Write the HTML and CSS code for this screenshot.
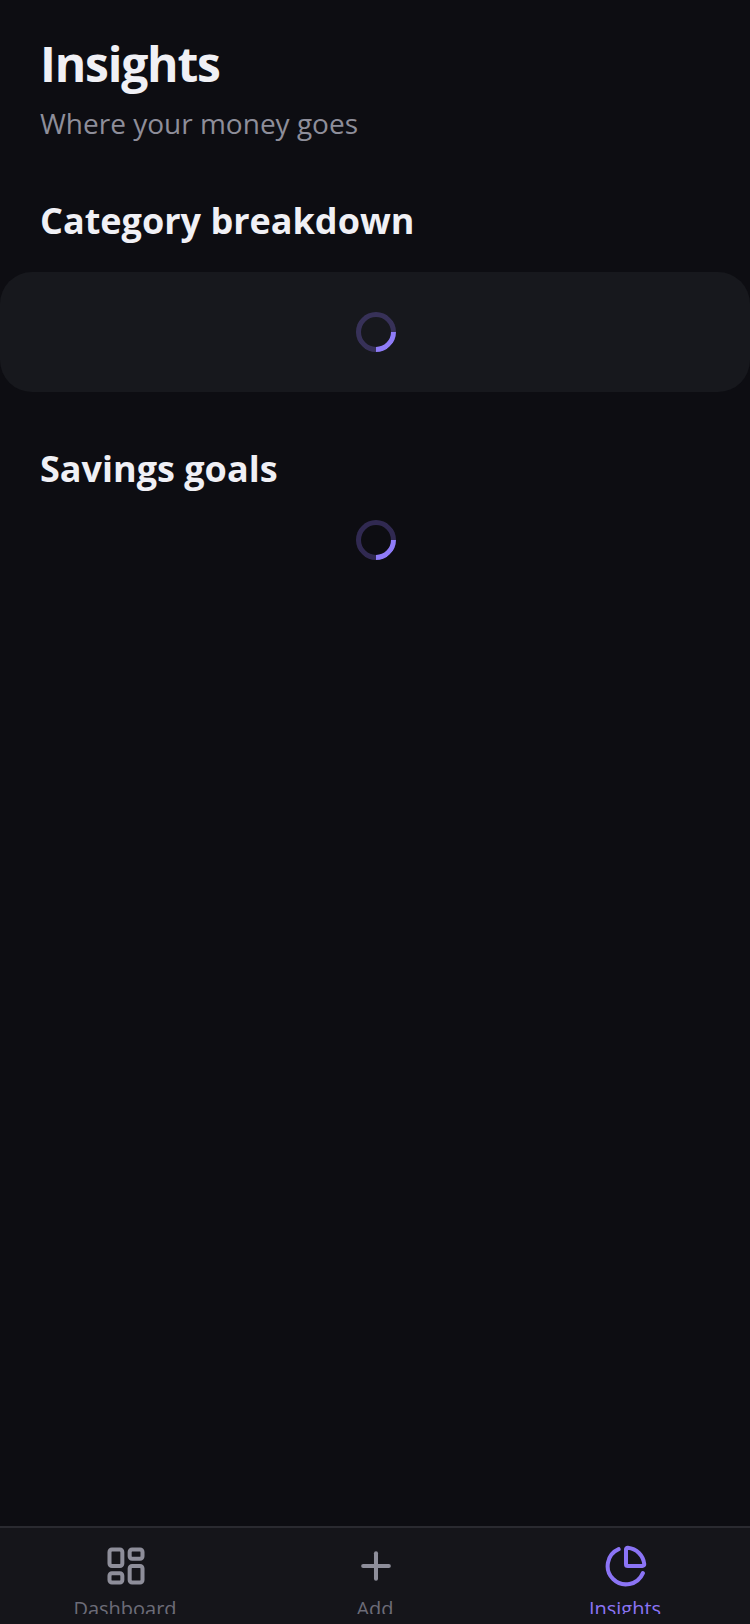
FILE: index.html
```html
<!DOCTYPE html>
<html lang="en">
<head>
<meta charset="utf-8">
<title>Insights</title>
<link rel="stylesheet" href="styles.css">
</head>
<body>
<div class="app">
  <main class="main">
    <header class="head">
      <h1 class="title">Insights</h1>
      <p class="subtitle">Where your money goes</p>
    </header>
    <h2 class="section first">Category breakdown</h2>
    <div class="card"><div class="spinner"></div></div>
    <h2 class="section second">Savings goals</h2>
    <div class="loose"><div class="spinner"></div></div>
  </main>
  <nav class="tabs">
    <div class="tab">
      <svg class="icon" viewBox="0 0 24 24" fill="none" stroke="currentColor" stroke-width="2.2" stroke-linejoin="round"><rect x="3" y="3" width="7" height="9" rx="1.3"/><rect x="14" y="3" width="7" height="5" rx="1.3"/><rect x="14" y="12" width="7" height="9" rx="1.3"/><rect x="3" y="16" width="7" height="5" rx="1.3"/></svg>
      <span class="label">Dashboard</span>
    </div>
    <div class="tab">
      <svg class="icon" viewBox="0 0 24 24" fill="none" stroke="currentColor" stroke-width="2.2" stroke-linecap="round"><path d="M5 12h14"/><path d="M12 5v14"/></svg>
      <span class="label">Add</span>
    </div>
    <div class="tab active">
      <svg class="icon" viewBox="0 0 24 24" fill="none" stroke="currentColor" stroke-width="2.2" stroke-linecap="round" stroke-linejoin="round"><path d="M21 12c.552 0 1.005-.449.95-.998a10 10 0 0 0-8.953-8.951c-.55-.055-.998.398-.998.95v8a1 1 0 0 0 1 1z"/><path d="M21.21 15.89A10 10 0 1 1 8 2.83"/></svg>
      <span class="label">Insights</span>
    </div>
  </nav>
</div>
</body>
</html>
```
FILE: styles.css
```css
* { box-sizing: border-box; }
html, body { margin: 0; height: 100%; }
body { background: #0d0d12; font-family: "Open Sans", sans-serif; }
.app { width: 750px; height: 1624px; display: flex; flex-direction: column; overflow: hidden; }
.main { flex: 1; min-height: 0; }
.head { padding: 32px 40px 0; }
.title { margin: 0; font-size: 48px; line-height: 64px; font-weight: 700; letter-spacing: -1.2px; color: #f0f0f5; }
.subtitle { margin: 7px 0 0; font-size: 28px; line-height: 40px; color: #8e8e9a; }
.section { margin: 0; padding: 0 40px; font-size: 36px; line-height: 48px; font-weight: 700; color: #f0f0f5; }
.first { margin-top: 54px; }
.second { margin-top: 53px; }
.card { margin-top: 27px; height: 120px; border-radius: 32px; background: #17181d; display: flex; align-items: center; justify-content: center; }
.loose { margin-top: 11px; height: 72px; display: flex; align-items: center; justify-content: center; }
.spinner { width: 40px; height: 40px; margin-left: 2px; border-radius: 50%; border: 5px solid rgba(139, 116, 245, 0.28); border-top-color: #8f7cf8; transform: rotate(135deg); }
.tabs { height: 98px; flex: none; display: flex; justify-content: space-between; align-items: flex-start; background: #15151a; border-top: 2px solid #2a2a30; }
.tab { width: 250px; height: 86px; overflow: hidden; display: flex; flex-direction: column; align-items: center; padding-top: 16px; color: #8e8e9a; }
.tab.active { color: #8b74f5; }
.icon { width: 44px; height: 44px; margin-left: 2px; display: block; flex: none; }
.label { font-size: 20px; line-height: 28px; margin-top: 7px; color: #6c6c78; }
.tab.active .label { color: #8b74f5; }
```
